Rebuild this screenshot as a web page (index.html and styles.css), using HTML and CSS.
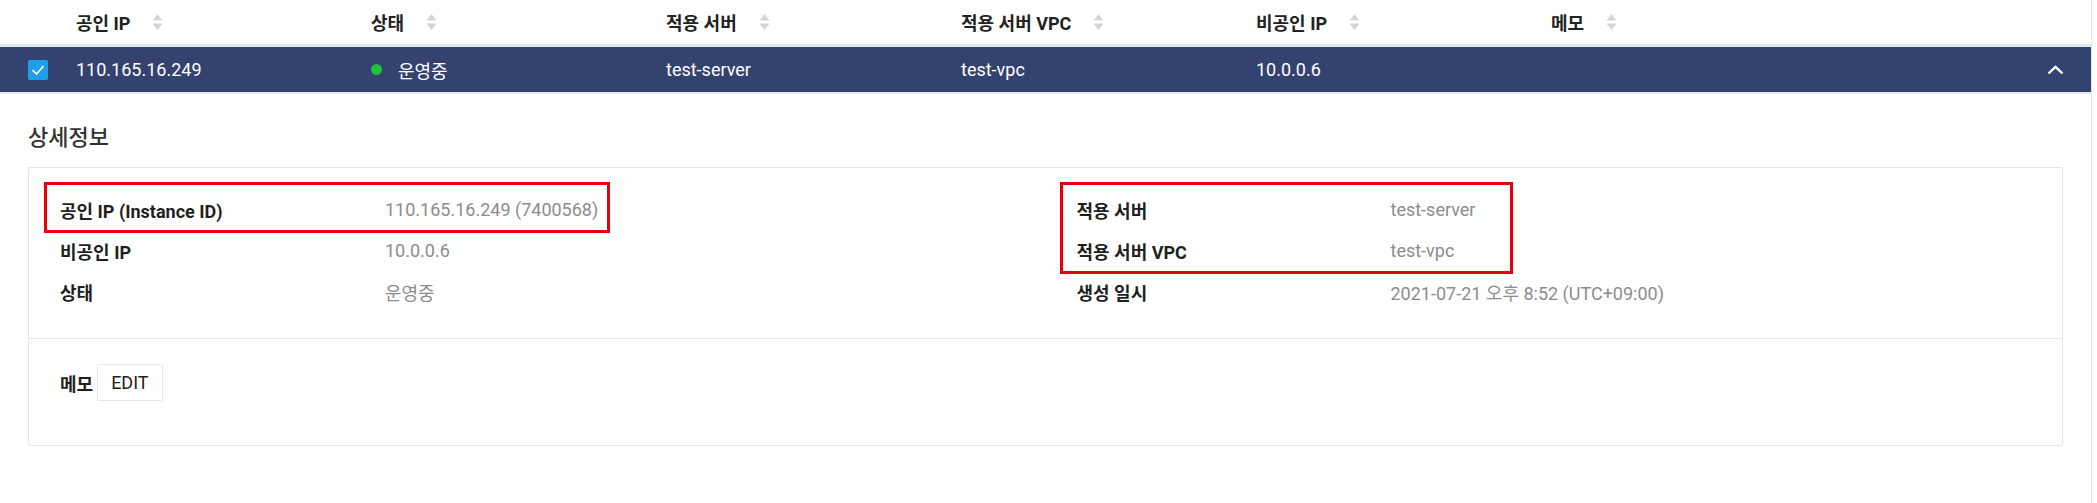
FILE: index.html
```html
<!DOCTYPE html>
<html>

<head>
    <title>공인 IP 상세정보</title>
    <link rel="stylesheet" href="styles.css">
</head>

<body>
    <div class="page">
        <div class="main">
            <div class="table-head">
                <div class="cell"></div>
                <div class="cell">공인 IP <span class="sort"><svg width="11" height="20" viewBox="0 0 11 20"><polygon points="0.5,8.5 5.5,2 10.5,8.5" /><polygon points="0.5,11.5 5.5,18 10.5,11.5" /></svg></span></div>
                <div class="cell">상태 <span class="sort"><svg width="11" height="20" viewBox="0 0 11 20"><polygon points="0.5,8.5 5.5,2 10.5,8.5" /><polygon points="0.5,11.5 5.5,18 10.5,11.5" /></svg></span></div>
                <div class="cell">적용 서버 <span class="sort"><svg width="11" height="20" viewBox="0 0 11 20"><polygon points="0.5,8.5 5.5,2 10.5,8.5" /><polygon points="0.5,11.5 5.5,18 10.5,11.5" /></svg></span></div>
                <div class="cell">적용 서버 VPC <span class="sort"><svg width="11" height="20" viewBox="0 0 11 20"><polygon points="0.5,8.5 5.5,2 10.5,8.5" /><polygon points="0.5,11.5 5.5,18 10.5,11.5" /></svg></span></div>
                <div class="cell">비공인 IP <span class="sort"><svg width="11" height="20" viewBox="0 0 11 20"><polygon points="0.5,8.5 5.5,2 10.5,8.5" /><polygon points="0.5,11.5 5.5,18 10.5,11.5" /></svg></span></div>
                <div class="cell">메모 <span class="sort"><svg width="11" height="20" viewBox="0 0 11 20"><polygon points="0.5,8.5 5.5,2 10.5,8.5" /><polygon points="0.5,11.5 5.5,18 10.5,11.5" /></svg></span></div>
                <div class="cell"></div>
            </div>

            <div class="table-row selected">
                <div class="cell check-cell">
                    <span class="checkbox"><svg width="20" height="20" viewBox="0 0 20 20"><polyline points="4.5,10 8.5,14 15.5,6" /></svg></span>
                </div>
                <div class="cell">110.165.16.249</div>
                <div class="cell"><span class="dot"></span>운영중</div>
                <div class="cell">test-server</div>
                <div class="cell">test-vpc</div>
                <div class="cell">10.0.0.6</div>
                <div class="cell"></div>
                <div class="cell toggle-cell">
                    <svg width="17" height="10" viewBox="0 0 17 10"><polyline points="1.5,8.5 8.5,1.8 15.5,8.5" /></svg>
                </div>
            </div>

            <div class="detail">
                <h3>상세정보</h3>
                <div class="card">
                    <div class="info">
                        <div class="col col-left">
                            <div class="mark mark-one">
                                <div class="item"><span class="label">공인 IP (Instance ID)</span><span class="value">110.165.16.249 (7400568)</span></div>
                            </div>
                            <div class="item"><span class="label">비공인 IP</span><span class="value">10.0.0.6</span></div>
                            <div class="item"><span class="label">상태</span><span class="value">운영중</span></div>
                        </div>
                        <div class="col col-right">
                            <div class="mark mark-two">
                                <div class="item"><span class="label">적용 서버</span><span class="value">test-server</span></div>
                                <div class="item"><span class="label">적용 서버 VPC</span><span class="value">test-vpc</span></div>
                            </div>
                            <div class="item"><span class="label">생성 일시</span><span class="value">2021-07-21 오후 8:52 (UTC+09:00)</span></div>
                        </div>
                    </div>
                    <div class="memo">
                        <span class="label">메모</span>
                        <button class="edit">EDIT</button>
                    </div>
                </div>
            </div>
        </div>
        <div class="scrollbar"></div>
    </div>
</body>

</html>
```

FILE: styles.css
```css
body {
    margin: 0;
    font-family: Roboto, "Noto Sans CJK KR", sans-serif;
    font-size: 18px;
    color: #222222;
    background: #ffffff;
}

.page {
    display: flex;
    height: 503px;
}

.main {
    flex: 1;
}

.scrollbar {
    width: 5px;
    border-left: 1px solid #e6e6e6;
}

.table-head,
.table-row {
    display: grid;
    grid-template-columns: 76px repeat(5, 295px) 1fr 80px;
    align-items: center;
}

.table-head {
    height: 44px;
    border-bottom: 3px solid #e2e6ed;
    font-weight: 700;
}

.cell {
    display: flex;
    align-items: center;
    white-space: nowrap;
}

.sort {
    display: inline-flex;
    margin-left: 22px;
}

.sort polygon {
    fill: #d5d5d5;
}

.table-row {
    height: 45px;
    border-bottom: 2px solid #e6e9ef;
}

.table-row.selected {
    background-color: #33426f;
    color: #ffffff;
}

.check-cell {
    padding-left: 28px;
}

.checkbox {
    display: inline-flex;
    width: 20px;
    height: 20px;
    background-color: #1e9fe9;
    border-radius: 2px;
}

.checkbox polyline {
    fill: none;
    stroke: #ffffff;
    stroke-width: 1.6;
}

.dot {
    width: 11px;
    height: 11px;
    border-radius: 50%;
    background-color: #1fc23c;
    margin-right: 16px;
}

.toggle-cell {
    justify-content: flex-end;
    padding-right: 27px;
}

.toggle-cell polyline {
    fill: none;
    stroke: #ffffff;
    stroke-width: 2.4;
}

.detail {
    padding: 30px 28px 0 28px;
}

h3 {
    margin: 0 0 15px;
    font-size: 22px;
    font-weight: 500;
    line-height: 28px;
    color: #333333;
}

.card {
    border: 1px solid #e6e6e6;
    border-radius: 2px;
}

.info {
    display: flex;
    padding: 21px 0 26px;
    border-bottom: 1px solid #e6e6e6;
}

.col {
    flex: 1;
    padding-left: 31px;
}

.item {
    display: flex;
    height: 41px;
    align-items: center;
    white-space: nowrap;
}

.label {
    font-weight: 700;
    color: #1f1f1f;
}

.col-left .label {
    width: 325px;
}

.col-right .label {
    width: 314px;
}

.value {
    color: #8c8c8c;
}

.mark {
    border: 3px solid #e3000f;
    padding-top: 4px;
    margin-top: -7px;
    margin-bottom: -3px;
}

.mark-one {
    width: fit-content;
    padding-left: 13px;
    padding-right: 9px;
    margin-left: -16px;
}

.mark-two {
    width: 453px;
    box-sizing: border-box;
    padding-left: 14px;
    margin-left: -17px;
}

.memo {
    display: flex;
    align-items: center;
    gap: 4px;
    padding: 25px 31px 44px;
}

.edit {
    height: 37px;
    padding: 0 13px;
    background: #ffffff;
    border: 1px solid #e8e8e8;
    border-radius: 2px;
    font-family: Roboto, "Noto Sans CJK KR", sans-serif;
    font-size: 18px;
    color: #222222;
}
```
